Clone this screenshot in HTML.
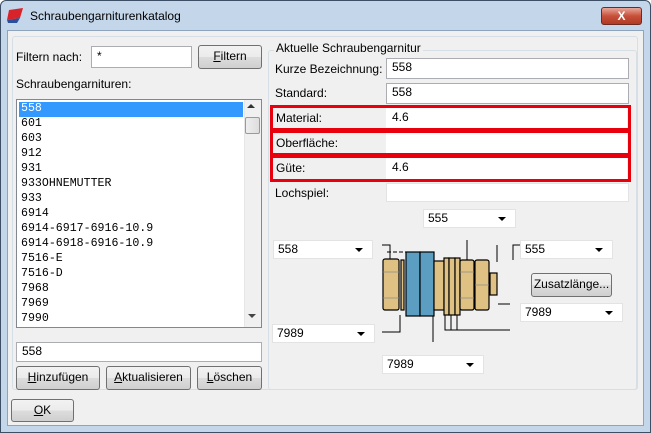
<!DOCTYPE html>
<html><head><meta charset="utf-8"><style>
*{box-sizing:border-box;margin:0;padding:0}
body{width:651px;height:433px;position:relative;overflow:hidden;font-family:"Liberation Sans",sans-serif;font-size:12px;color:#000;background:#fff}
.a{position:absolute}
.frame{left:0;top:0;width:651px;height:433px;background:#c4d6ea;border:1px solid #3d4f64;border-radius:6px 6px 0 0}
.title{left:30px;top:9px;font-size:12px}
.close{left:601px;top:7px;width:41px;height:18px;border:1px solid #6b2b22;border-radius:3px;background:linear-gradient(#e8a89b,#c7503a 50%,#b23a24);color:#fff;font-weight:bold;text-align:center;line-height:16px;font-size:12px}
.client{left:7px;top:30px;width:637px;height:396px;background:#f0f0f0;border:1px solid #8ea4bd}
.panel{left:12px;top:36px;width:626px;height:354px;border:1px solid #d5dfe5;border-radius:3px}
.inp{background:#fff;border:1px solid #abadb3;padding-left:5px;line-height:17px}
.btn{border:1px solid #707070;border-radius:3px;background:linear-gradient(#f2f2f2,#ebebeb 50%,#dddddd 51%,#cfcfcf);text-align:center;line-height:21px}
.lst{left:16px;top:99px;width:246px;height:229px;background:#fff;border:1px solid #828790}
.it{position:absolute;left:4px;font-family:"Liberation Mono",monospace;font-size:11.6px}
.grp{left:268px;top:50px;width:369px;height:340px;border:1px solid #d5dfe5;border-radius:3px}
.red{border:3px solid #e8000d}
.cb{background:#fff;border:1px solid #e3e3e3;padding-left:4px;line-height:17px;height:19px}
.cb:after{content:"";position:absolute;right:9px;top:7px;border:4px solid transparent;border-top:4px solid #000;border-bottom:0}
u{text-decoration:underline}
</style></head><body>
<div class="a frame"></div>
<svg class="a" style="left:5px;top:7px" width="20" height="18"><polygon points="4,3 18,1 15,11 2,13" fill="#d8232a"/><polygon points="2,13 15,11 12,16 3,16" fill="#2c4f9c"/></svg>
<div class="a title">Schraubengarniturenkatalog</div>
<div class="a close">X</div>
<div class="a client"></div>
<div class="a panel"></div>

<div class="a" style="left:16px;top:50px">Filtern nach:</div>
<div class="a inp" style="left:91px;top:46px;width:101px;height:22px;line-height:19px">*</div>
<div class="a btn" style="left:198px;top:45px;width:64px;height:24px"><u>F</u>iltern</div>
<div class="a" style="left:16px;top:77px">Schraubengarnituren:</div>
<div class="a lst">
<div class="a" style="left:2px;top:2px;width:224px;height:15px;background:#3399ff"></div>
<div class="it" style="top:2px;color:#fff">558</div>
<div class="it" style="top:17px">601</div>
<div class="it" style="top:32px">603</div>
<div class="it" style="top:47px">912</div>
<div class="it" style="top:62px">931</div>
<div class="it" style="top:77px">933OHNEMUTTER</div>
<div class="it" style="top:92px">933</div>
<div class="it" style="top:107px">6914</div>
<div class="it" style="top:122px">6914-6917-6916-10.9</div>
<div class="it" style="top:137px">6914-6918-6916-10.9</div>
<div class="it" style="top:152px">7516-E</div>
<div class="it" style="top:167px">7516-D</div>
<div class="it" style="top:182px">7968</div>
<div class="it" style="top:197px">7969</div>
<div class="it" style="top:212px">7990</div>
<div class="a" style="left:227px;top:0;width:17px;height:227px;background:#f0f0f0;border-left:1px solid #e6e6e6"></div>
<div class="a" style="left:230px;top:4px;border:4px solid transparent;border-bottom:4px solid #333;border-top:0"></div>
<div class="a" style="left:228px;top:17px;width:15px;height:17px;border:1px solid #9a9a9a;border-radius:2px;background:linear-gradient(90deg,#eee,#ddd)"></div>
<div class="a" style="left:231px;top:214px;border:4px solid transparent;border-top:4px solid #444;border-bottom:0"></div>
</div>
<div class="a inp" style="left:16px;top:342px;width:246px;height:20px">558</div>
<div class="a btn" style="left:16px;top:366px;width:84px;height:24px"><u>H</u>inzufügen</div>
<div class="a btn" style="left:106px;top:366px;width:85px;height:24px"><u>A</u>ktualisieren</div>
<div class="a btn" style="left:197px;top:366px;width:65px;height:24px"><u>L</u>öschen</div>
<div class="a btn" style="left:11px;top:399px;width:63px;height:23px"><u>O</u>K</div>

<div class="a grp"></div>
<div class="a" style="left:274px;top:41px;background:#f0f0f0;padding:0 2px">Aktuelle Schraubengarnitur</div>
<div class="a" style="left:275px;top:62px">Kurze Bezeichnung:</div>
<div class="a inp" style="left:386px;top:58px;width:243px;height:21px">558</div>
<div class="a" style="left:275px;top:86px">Standard:</div>
<div class="a inp" style="left:386px;top:83px;width:243px;height:21px">558</div>
<div class="a red" style="left:270px;top:105px;width:361px;height:26px"></div>
<div class="a red" style="left:270px;top:130px;width:361px;height:26px"></div>
<div class="a red" style="left:270px;top:155px;width:361px;height:27px"></div>
<div class="a" style="left:276px;top:111px">Material:</div>
<div class="a inp" style="left:386px;top:108px;width:241px;height:20px;border-color:#fff">4.6</div>
<div class="a" style="left:276px;top:136px">Oberfläche:</div>
<div class="a inp" style="left:386px;top:133px;width:241px;height:20px;border-color:#fff"></div>
<div class="a" style="left:276px;top:161px">Güte:</div>
<div class="a inp" style="left:386px;top:158px;width:241px;height:21px;border-color:#fff">4.6</div>
<div class="a" style="left:275px;top:186px">Lochspiel:</div>
<div class="a inp" style="left:386px;top:183px;width:243px;height:19px;border-color:#e3e3e3"></div>

<div class="a cb" style="left:423px;top:209px;width:93px">555</div>
<div class="a cb" style="left:273px;top:240px;width:100px">558</div>
<div class="a cb" style="left:520px;top:240px;width:93px">555</div>
<div class="a btn" style="left:531px;top:273px;width:81px;height:24px">Zusatzlänge...</div>
<div class="a cb" style="left:520px;top:303px;width:103px">7989</div>
<div class="a cb" style="left:272px;top:324px;width:103px">7989</div>
<div class="a cb" style="left:382px;top:355px;width:102px">7989</div>

<svg class="a" style="left:370px;top:235px" width="150" height="110">
<g stroke="#000" stroke-width="1" fill="none">
<polyline points="12,10 20,10 20,25"/>
<line x1="17" y1="17" x2="40" y2="17" stroke-dasharray="4,2"/>
<polyline points="12,115 30,115"/>
<polyline points="12,97 30,97 30,80"/>
<line x1="127" y1="27" x2="127" y2="10"/>
<polyline points="166,10 143,10 143,25"/>
<line x1="97" y1="5" x2="97" y2="25"/>
<line x1="128" y1="69" x2="140" y2="69"/>
<line x1="63" y1="80" x2="63" y2="107"/>
<polyline points="75,80 75,95 140,95"/>
<line x1="81" y1="80" x2="81" y2="95"/>
<line x1="87" y1="80" x2="87" y2="95"/>
</g>
<g stroke="#000" stroke-width="1.2">
<rect x="13" y="24" width="16" height="51" rx="2" fill="#dfc183"/>
<rect x="31" y="25" width="3" height="50" fill="#dfc183"/>
<rect x="36" y="17" width="14" height="64" fill="#5b9ec2"/>
<rect x="50" y="17" width="14" height="64" fill="#5b9ec2"/>
<rect x="64" y="26" width="10" height="49" fill="#dfc183"/>
<rect x="74" y="23" width="5" height="57" fill="#dfc183"/>
<rect x="79" y="23" width="6" height="57" fill="#dfc183"/>
<rect x="85" y="23" width="5" height="57" fill="#dfc183"/>
<rect x="90" y="25" width="14" height="50" rx="2" fill="#dfc183"/>
<rect x="105" y="25" width="14" height="50" rx="2" fill="#dfc183"/>
<rect x="120" y="38" width="7" height="22" fill="#dfc183"/>
</g>
<g stroke="#888" stroke-width="0.7">
<line x1="13" y1="37" x2="29" y2="37"/><line x1="13" y1="63" x2="29" y2="63"/>
<line x1="90" y1="37" x2="104" y2="37"/><line x1="90" y1="63" x2="104" y2="63"/>
<line x1="105" y1="50" x2="119" y2="50"/>
</g>
</svg>
</body></html>
